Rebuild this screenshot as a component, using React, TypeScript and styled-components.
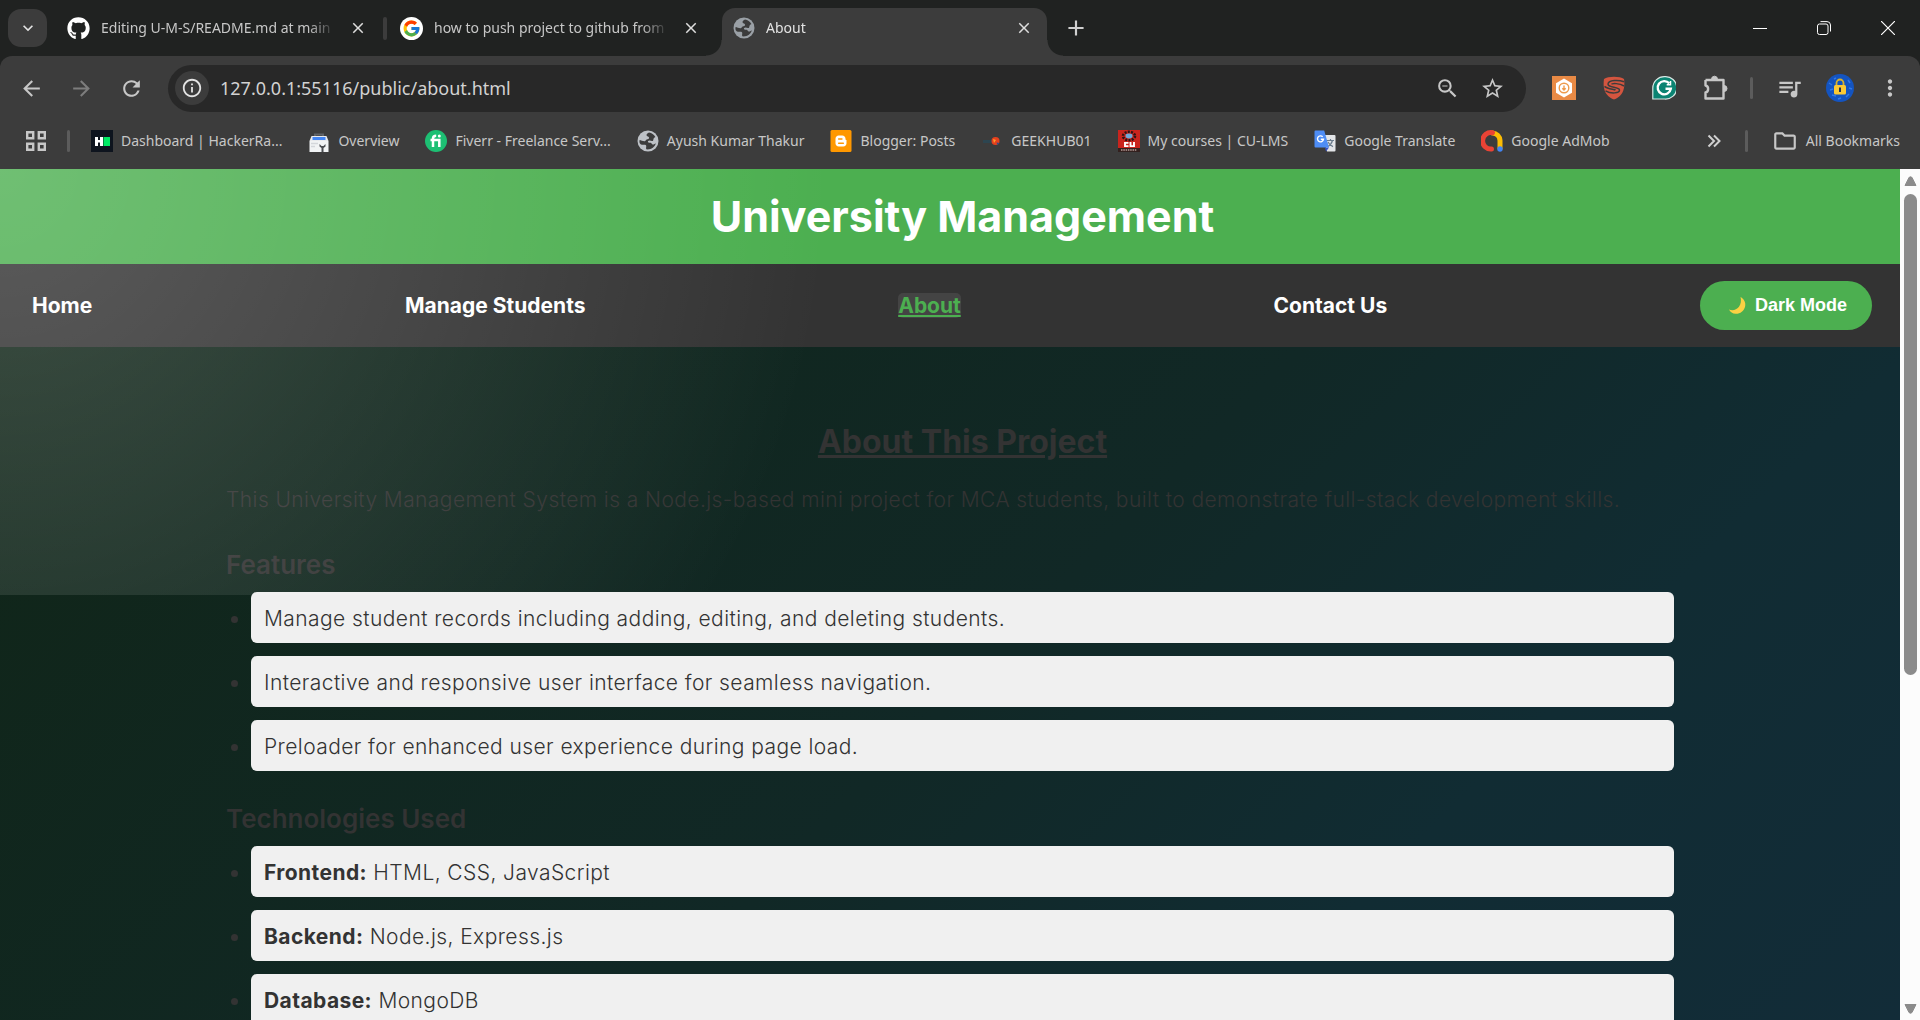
import React from "react";
import styled, { createGlobalStyle, css } from "styled-components";
import {
  MdArrowBack,
  MdArrowForward,
  MdRefresh,
  MdInfoOutline,
  MdZoomOut,
  MdStarBorder,
  MdQueueMusic,
  MdMoreVert,
  MdClose,
  MdAdd,
  MdExpandMore,
  MdOutlineFolder,
} from "react-icons/md";
import { FaGithub } from "react-icons/fa";
import { FcGoogle } from "react-icons/fc";

const uiFont = `"Segoe UI", "Noto Sans", "Open Sans", sans-serif`;
const pageFont = `Inter, "Liberation Sans", sans-serif`;

const GlobalStyle = createGlobalStyle`
  *, *::before, *::after { box-sizing: border-box; }
  body { margin: 0; background: #202221; }
  button { border: 0; padding: 0; background: none; color: inherit; font: inherit; cursor: pointer; }
  svg { display: block; flex: none; }
`;

const Window = styled.div`
  display: flex;
  flex-direction: column;
  height: 100vh;
  overflow: hidden;
  font-family: ${uiFont};
  color: #c7c7c7;
`;

/* ---------- tab strip ---------- */

const TabStrip = styled.div`
  display: flex;
  align-items: flex-end;
  height: 56px;
  padding-left: 8px;
  background: #202221;
`;

const TabSearch = styled.button`
  display: flex;
  align-items: center;
  justify-content: center;
  width: 39px;
  height: 38px;
  margin: 0 9px 9px 0;
  border-radius: 13px;
  background: #3c3c3c;
  color: #e3e3e3;
`;

const TabItem = styled.div<{ $active?: boolean }>`
  position: relative;
  display: flex;
  align-items: center;
  gap: 11px;
  width: 333px;
  height: 48px;
  padding: 0 22px 8px 11px;
  line-height: 20px;
  ${(p) =>
    p.$active &&
    css`
      width: 325px;
      padding-right: 14px;
      border-radius: 13px 13px 0 0;
      background: #3c3c3c;
      color: #e3e3e3;
      &::before,
      &::after {
        content: "";
        position: absolute;
        bottom: 0;
        width: 16px;
        height: 16px;
      }
      &::before {
        right: 100%;
        background: radial-gradient(circle at 0 0, transparent 15px, #3c3c3c 16px);
      }
      &::after {
        left: 100%;
        background: radial-gradient(circle at 100% 0, transparent 15px, #3c3c3c 16px);
      }
    `}
`;

const TabTitle = styled.span`
  flex: 1;
  overflow: hidden;
  white-space: nowrap;
  font-size: 14px;
  mask-image: linear-gradient(to right, #000 calc(100% - 28px), transparent);
`;

const TabClose = styled.button`
  display: flex;
  margin-left: 2px;
  color: #dedede;
`;

const TabDivider = styled.span`
  width: 4px;
  height: 23px;
  margin-bottom: 16px;
  margin-left: -6px;
  margin-right: 2px;
  border-radius: 2px;
  background: #3c3c3c;
`;

const NewTab = styled.button`
  display: flex;
  margin: 0 auto 15px 16px;
  color: #d0d0d0;
`;

const WindowControls = styled.div`
  display: flex;
  align-items: center;
  height: 56px;
`;

const WindowButton = styled.button`
  display: flex;
  align-items: center;
  justify-content: center;
  width: 64px;
  height: 56px;
  color: #fff;
`;

/* ---------- toolbar ---------- */

const BrowserBars = styled.div`
  background: linear-gradient(#202221 10px, #3c3c3c 10px);
`;

const Toolbar = styled.div`
  display: flex;
  align-items: center;
  height: 64px;
  padding: 0 17px 0 19px;
  border-radius: 12px 12px 0 0;
  background: #3c3c3c;
`;

const NavButtons = styled.div`
  display: flex;
  gap: 25px;
  margin-right: 24px;
`;

const IconButton = styled.button<{ $dim?: boolean }>`
  display: flex;
  align-items: center;
  justify-content: center;
  min-width: 24px;
  height: 32px;
  color: ${(p) => (p.$dim ? "#7d7d7d" : "#c7c7c7")};
`;

const AddressBar = styled.div`
  display: flex;
  flex: 1;
  align-items: center;
  gap: 20px;
  height: 47px;
  padding: 0 21px 0 7px;
  border-radius: 24px;
  background: #282828;
`;

const SiteInfo = styled.button`
  display: flex;
  align-items: center;
  justify-content: center;
  width: 34px;
  height: 34px;
  margin-right: -9px;
  border-radius: 50%;
  background: #3c3c3c;
  color: #e3e3e3;
`;

const AddressInput = styled.input`
  flex: 1;
  min-width: 0;
  height: 40px;
  padding: 0;
  border: 0;
  outline: 0;
  background: transparent;
  color: #d2d2d2;
  font-family: ${uiFont};
  font-size: 18px;
`;

const Extensions = styled.div`
  display: flex;
  align-items: center;
  gap: 26px;
  margin-left: 26px;
`;

const ProfileTools = styled.div`
  display: flex;
  align-items: center;
  gap: 23px;
  margin-left: 22px;
`;

const Divider = styled.span`
  width: 3px;
  height: 22px;
  border-radius: 2px;
  background: #5c5c5c;
`;

/* ---------- bookmarks ---------- */

const BookmarkBar = styled.nav`
  display: flex;
  align-items: center;
  gap: 21px;
  height: 49px;
  padding: 0 20px 8px 26px;
  color: #c7c7c7;
  font-size: 14px;
  line-height: 20px;
  white-space: nowrap;
`;

const BookmarkList = styled.div`
  display: flex;
  flex: 1;
  gap: 26px;
  min-width: 0;
  overflow: hidden;
`;

const BookmarkOverflow = styled.div`
  display: flex;
  align-items: center;
  gap: 24px;
`;

const Bookmark = styled.a`
  display: flex;
  align-items: center;
  gap: 8px;
  color: inherit;
  text-decoration: none;
`;

/* ---------- web page ---------- */

const Viewport = styled.div`
  display: flex;
  flex: 1;
  min-height: 0;
`;

const Page = styled.div`
  position: relative;
  flex: 1;
  overflow: hidden;
  background: linear-gradient(135deg, #102516 0, #112826 1050px, #112c33 1480px, #122c38 1950px);
  color: #333;
  font-family: ${pageFont};
`;

const Glow = styled.div`
  position: absolute;
  top: 0;
  left: 0;
  width: 50%;
  height: 50%;
  background: radial-gradient(circle at top left, rgba(255, 255, 255, 0.2), transparent 80%);
  pointer-events: none;
`;

const Header = styled.header`
  padding: 20px 0 20px 25px;
  background: #4caf50;
  color: #fff;
  text-align: center;
`;

const SiteTitle = styled.h1`
  margin: 0;
  font-size: 43px;
  line-height: 55px;
  font-weight: 700;
`;

const SiteNav = styled.nav`
  display: flex;
  align-items: center;
  justify-content: space-between;
  height: 83px;
  padding: 0 28px 0 32px;
  background: #333;
`;

const NavLink = styled.a<{ $active?: boolean }>`
  border-radius: 5px;
  background: ${(p) => (p.$active ? "#444" : "transparent")};
  color: ${(p) => (p.$active ? "#4caf50" : "#fff")};
  font-size: 21px;
  line-height: 25px;
  font-weight: 700;
  text-decoration: ${(p) => (p.$active ? "underline" : "none")};
`;

const ThemeToggle = styled.button`
  display: flex;
  align-items: center;
  gap: 8px;
  height: 49px;
  padding: 0 25px 0 28px;
  border-radius: 25px;
  background: #4caf50;
  color: #fff;
  font-family: Arial, "Liberation Sans", sans-serif;
  font-size: 18px;
  font-weight: 700;
`;

const Main = styled.main`
  padding: 76px 0 0 25px;
`;

const Content = styled.div`
  max-width: 1473px;
  margin: 0 auto;
`;

const PageTitle = styled.h2`
  margin: 0 0 22px;
  font-size: 32px;
  line-height: 38px;
  font-weight: 700;
  text-align: center;
  text-decoration: underline;
`;

const Intro = styled.p`
  margin: 0;
  font-size: 21px;
  line-height: 34px;
  font-weight: 300;
  letter-spacing: 0.02em;
`;

const SectionTitle = styled.h3`
  margin: 0;
  padding: 32px 0 11px;
  font-size: 26px;
  line-height: 32px;
  font-weight: 600;
`;

const List = styled.ul`
  display: grid;
  gap: 13px;
  margin: 0;
  padding: 0 25px;
`;

const ListItem = styled.li`
  padding: 11px 13px 8px;
  border-radius: 6px;
  background: #f0f0f0;
  font-size: 21px;
  line-height: 32px;
  font-weight: 300;
  letter-spacing: 0.02em;
`;

const Strong = styled.strong`
  font-weight: 700;
`;

const ScrollTrack = styled.div`
  display: flex;
  flex-direction: column;
  align-items: center;
  gap: 8px;
  width: 20px;
  padding: 7px 0 6px;
  background: #fcfcfc;
`;

const ScrollSpace = styled.div`
  flex: 1;
  width: 13px;
`;

const ScrollThumb = styled.div`
  width: 13px;
  height: 60%;
  border-radius: 7px;
  background: #8b8b8b;
`;

/* ---------- drawings ---------- */

const Globe = ({ color = "#bdc1c6" }: { color?: string }) => (
  <svg width="22" height="22" viewBox="0 0 22 22">
    <circle cx="11" cy="11" r="10.5" fill={color} />
    <path
      d="M12 2.600c-2 .8-2.800 2-2.300 3.200.5 1 2.300.6 2.400 1.900.1 1.400-1.400 1.300-2.500 1.700-1 .4-.8 1.600-2 1.800-1.500.2-3.600-1-5-1.200-.7 3 .5 4.400 2.200 4.700 1.900.3 3.600-.3 4.300.9.5 1-.3 1.800.1 3.700 4.500.7 8.600-2 9.700-6.100-1.200.5-1.900 1.500-3.100 1.300-1.200-.2-1-1.600-2.200-1.800-1-.2-1.900.3-2.500-.4-.6-.9.3-1.700 1.400-1.700 1.300 0 2.200.9 3.300.3.9-.5.3-1.700 1-2.600.5-.7 1.200-.6 1.600-1.200-1.500-2.400-3.600-4-6.400-4.500z"
      fill="#3c3c3c"
    />
  </svg>
);

const AppsIcon = () => (
  <svg width="20" height="20" viewBox="0 0 20 20" fill="none" stroke="#c7c7c7" strokeWidth="2.4">
    <path d="M1.200 1.200h6v6h-6zM12.800 1.200h6v6h-6zM1.200 12.800h6v6h-6zM12.800 12.800h6v6h-6z" />
  </svg>
);

const HackerRank = () => (
  <svg width="22" height="22" viewBox="0 0 22 22">
    <rect width="22" height="22" fill="#0e141e" />
    <path d="M4 7h3v3h2V7h3v9H9v-3.500H7V16H4z" fill="#fff" />
    <rect x="12.5" y="7" width="6.5" height="9" fill="#00ea64" />
  </svg>
);

const Toolbox = () => (
  <svg width="22" height="22" viewBox="0 0 22 22">
    <path d="M7 6V4.500h8V6" fill="none" stroke="#5f6368" strokeWidth="2" />
    <path d="M3.500 6h15l2 5h-19z" fill="#e8eaed" />
    <path d="M4.500 7h13v3h-13z" fill="#4285f4" />
    <path d="M1.500 11h19v11h-19z" fill="#f1f3f4" />
    <path d="M3 13.500h7M3 16.500h4" stroke="#d3d6da" strokeWidth="1.400" />
    <path d="M11.500 14v2.500l2 1.500v4h2v-4l2-1.500V14l-2 2h-2z" fill="#4a4d51" />
  </svg>
);

const Fiverr = () => (
  <svg width="22" height="22" viewBox="0 0 22 22">
    <circle cx="11" cy="11" r="11" fill="#1dbf73" />
    <path
      d="M8 17V8.500c0-2 1-2.800 3.200-2.800M5.500 10h8.800V17"
      fill="none"
      stroke="#fff"
      strokeWidth="2.500"
    />
    <circle cx="14.300" cy="6" r="1.500" fill="#fff" />
  </svg>
);

const Blogger = () => (
  <svg width="22" height="22" viewBox="0 0 22 22">
    <rect x=".5" width="21" height="22" rx="1.5" fill="#ff9800" />
    <path
      d="M8.800 5.500h3.400c2 0 3.300 1.300 3.300 3.200 0 1 .3 1.300 1 1.300v3.300c0 1.900-1.300 3.200-3.200 3.200H8.800c-2 0-3.300-1.300-3.300-3.200V8.700c0-1.900 1.300-3.200 3.300-3.200z"
      fill="#fff"
    />
    <path d="M8.700 9h3.200M8.700 13.200h4.600" stroke="#ff9800" strokeWidth="1.600" strokeLinecap="round" />
  </svg>
);

const GeekHub = () => (
  <svg width="22" height="22" viewBox="0 0 22 22">
    <path d="M2 10h9v3H2z" fill="#2d4550" />
    <circle cx="14.500" cy="11" r="4" fill="#e5401e" />
    <path d="M12 9l3 1-2 3z" fill="#ff9d2e" />
    <path d="M15.500 12.500l3 .5-2 2z" fill="#2a4d8f" />
  </svg>
);

const CuLms = () => (
  <svg width="22" height="22" viewBox="0 0 22 22">
    <rect width="22" height="22" fill="#c9241d" />
    <ellipse cx="11" cy="6" rx="6" ry="4.200" fill="none" stroke="#2a1414" strokeWidth="2.600" strokeDasharray="2 1.200" />
    <ellipse cx="11" cy="6" rx="3.500" ry="2.400" fill="#6ea9d8" />
    <path d="M10.500 12.900H7v3.200h3.500M12.500 12v4.100H16V12" fill="none" stroke="#fff" strokeWidth="1.900" />
    <rect y="18" width="22" height="4" fill="#33201e" />
    <path d="M3 20h16" stroke="#b79b96" strokeWidth="1.400" strokeDasharray="1.500 .8" />
  </svg>
);

const Translate = () => (
  <svg width="22" height="22" viewBox="0 0 22 22">
    <path d="M9 5h11.500a1 1 0 0 1 1 1v14.500a1 1 0 0 1-1 1H13z" fill="#e3e5e8" />
    <path
      d="M12.500 10.500h7.500M16.500 9v1.500M18.500 10.500c-.8 3-2.500 4.800-5 6.200M14 12c1 2 2.800 3.700 5 4.600"
      fill="none"
      stroke="#6b7c8c"
      strokeWidth="1.200"
    />
    <path d="M11 17.500h4l-3 4z" fill="#3751c6" />
    <path d="M1.500.5h8.700L15 17.500H1.500a1 1 0 0 1-1-1v-15a1 1 0 0 1 1-1z" fill="#4e8df6" />
    <path d="M8.700 6.800A3 3 0 1 0 9.500 9.200H6.800" fill="none" stroke="#fff" strokeWidth="1.400" />
  </svg>
);

const AdMob = () => (
  <svg width="22" height="22" viewBox="0 0 22 22" fill="none" strokeWidth="5" strokeLinecap="round">
    <path d="M11.500 3A8 8 0 0 1 19 10.500V18" stroke="#fbbc04" />
    <path d="M11.500 2.800a8.200 8.200 0 1 0-1 16.200" stroke="#ea4335" />
    <circle cx="19" cy="19" r="2.700" fill="#4285f4" />
  </svg>
);

const OrangeExt = () => (
  <svg width="24" height="24" viewBox="0 0 24 24">
    <rect width="24" height="24" fill="#e98a45" />
    <path d="M12 2.500l8 4.700v9.600l-8 4.700-8-4.700V7.200z" fill="#fff" />
    <circle cx="12" cy="12" r="4.800" fill="none" stroke="#ee9a4c" strokeWidth="1.400" />
    <path d="M12 9.500v4M10.300 12.200l1.700 1.800 1.700-1.800" fill="none" stroke="#ee9a4c" strokeWidth="1.400" />
  </svg>
);

const SwaggerShield = () => (
  <svg width="24" height="24" viewBox="0 0 24 24">
    <path
      d="M12 .8C8 .8 4 1.500 2 3c-.8 5-.5 11 2.500 15 2 2.800 5 4.700 7.500 5.500 2.500-.8 5.500-2.700 7.500-5.500 3-4 3.300-10 2.500-15-2-1.500-6-2.200-10-2.200z"
      fill="#d4553f"
    />
    <path
      d="M22 5.800C17 3.700 6.500 3.600 6 8c-.4 4 11.200 2.600 11.500 6 .2 3.400-8.500 4-14 .8M22 10C17.500 7.200 10 7 9.800 8.400M2.500 10.300c3.500 2.800 10 2.800 11 3.800"
      fill="none"
      stroke="#3c3c3c"
      strokeWidth="1.500"
    />
  </svg>
);

const Grammarly = () => (
  <svg width="24" height="24" viewBox="0 0 24 24">
    <path
      d="M12.500.7A11.200 11.200 0 1 1 12.500 23H.8V12A11.500 11.500 0 0 1 12.500.7z"
      fill="#0b8372"
      stroke="#d8e8e5"
      strokeWidth="1.200"
    />
    <path d="M17.300 7.400A6.600 6.600 0 1 0 18.800 12.800H13.500" fill="none" stroke="#fff" strokeWidth="2.400" />
    <path d="M18.500 5v3.800h-3.800" fill="none" stroke="#fff" strokeWidth="1.500" />
  </svg>
);

const Puzzle = () => (
  <svg width="26" height="26" viewBox="0 0 26 26">
    <path
      d="M3.500 5h18v4.500M21.500 17v6.500h-18V17.500c3.500-.5 3.500-6.500 0-7V5M21.500 9.500V17"
      fill="none"
      stroke="#c7c7c7"
      strokeWidth="2.400"
      strokeLinejoin="round"
    />
    <path d="M9.500 4.500a3 3.300 0 0 1 6 0zM22 10.500a3 3 0 0 1 0 6z" fill="#c7c7c7" stroke="#c7c7c7" />
  </svg>
);

const Avatar = () => (
  <svg width="28" height="28" viewBox="0 0 28 28">
    <circle cx="14" cy="14" r="14" fill="#1454c0" />
    <path
      d="M3 9l3 2M4 16l3-1M6 21l4 1M20 23l3-3M22 6l2 3M12 25l3-1M23 14l3 1M8 5l2-1"
      stroke="#2f78e8"
      strokeWidth="1.500"
    />
    <path d="M10.500 12V9a3.500 3.500 0 0 1 7 0v3" fill="none" stroke="#d8b22c" strokeWidth="1.800" />
    <rect x="8" y="11" width="12" height="9.500" rx="1.5" fill="#fcc934" />
    <path d="M14 13.500v4.500" stroke="#26324f" strokeWidth="2" />
  </svg>
);

const Chevrons = () => (
  <svg width="14" height="14" viewBox="0 0 14 14" fill="none" stroke="#d0d0d0" strokeWidth="2">
    <path d="M1.500 1.500L7 7l-5.500 5.500M7 1.500L12.500 7 7 12.500" />
  </svg>
);

const Moon = () => (
  <svg width="19" height="19" viewBox="0 0 19 19">
    <path
      d="M12.500 1c3.500 2 5.500 5.500 4.600 9.500-1 4.500-5 7.500-9.500 7.300-3-.1-5.300-1.700-6.600-4.300 3.500 1.500 7.500.5 9.800-2.500 2.200-3 2.600-6.500 1.700-10z"
      fill="#fbd143"
    />
  </svg>
);

const Minimize = () => (
  <svg width="14" height="14" viewBox="0 0 14 14" stroke="#fff">
    <path d="M0 7.500h14" />
  </svg>
);

const Restore = () => (
  <svg width="14" height="14" viewBox="0 0 14 14" fill="none" stroke="#fff">
    <rect x=".5" y="3" width="10.500" height="10.500" rx="2" />
    <path d="M3.500.6H10A3.500 3.500 0 0 1 13.500 4v6.500" />
  </svg>
);

const CloseWindow = () => (
  <svg width="14" height="14" viewBox="0 0 14 14" stroke="#fff" strokeWidth="1.200">
    <path d="M0 0l14 14M14 0L0 14" />
  </svg>
);

const Arrow = ({ down }: { down?: boolean }) => (
  <svg width="13" height="10" viewBox="0 0 13 10">
    <path
      d={down ? "M1 .5h11L8 8.500q-1.500 1.500-3 0z" : "M5 1.500q1.500-1.500 3 0L12 9.500H1z"}
      fill="#8b8b8b"
      stroke="#8b8b8b"
      strokeLinejoin="round"
    />
  </svg>
);

/* ---------- data ---------- */

const bookmarks = [
  { label: "Dashboard | HackerRa...", icon: <HackerRank /> },
  { label: "Overview", icon: <Toolbox /> },
  { label: "Fiverr - Freelance Serv...", icon: <Fiverr /> },
  { label: "Ayush Kumar Thakur", icon: <Globe /> },
  { label: "Blogger: Posts", icon: <Blogger /> },
  { label: "GEEKHUB01", icon: <GeekHub /> },
  { label: "My courses | CU-LMS", icon: <CuLms /> },
  { label: "Google Translate", icon: <Translate /> },
  { label: "Google AdMob", icon: <AdMob /> },
];

const links = ["Home", "Manage Students", "About", "Contact Us"];

const features = [
  "Manage student records including adding, editing, and deleting students.",
  "Interactive and responsive user interface for seamless navigation.",
  "Preloader for enhanced user experience during page load.",
];

const technologies = [
  ["Frontend:", "HTML, CSS, JavaScript"],
  ["Backend:", "Node.js, Express.js"],
  ["Database:", "MongoDB"],
];

const GoogleBadge = styled.span`
  display: flex;
  padding: 2px;
  border-radius: 50%;
  background: #fff;
`;

export default function App() {
  return (
    <Window>
      <GlobalStyle />
      <TabStrip>
        <TabSearch aria-label="Search tabs">
          <MdExpandMore size={20} />
        </TabSearch>
        <TabItem>
          <FaGithub size={23} color="#fff" />
          <TabTitle>Editing U-M-S/README.md at main</TabTitle>
          <TabClose aria-label="Close tab">
            <MdClose size={18} />
          </TabClose>
        </TabItem>
        <TabDivider />
        <TabItem>
          <GoogleBadge>
            <FcGoogle size={19} />
          </GoogleBadge>
          <TabTitle>how to push project to github from</TabTitle>
          <TabClose aria-label="Close tab">
            <MdClose size={18} />
          </TabClose>
        </TabItem>
        <TabItem $active>
          <Globe color="#9aa0a6" />
          <TabTitle>About</TabTitle>
          <TabClose aria-label="Close tab">
            <MdClose size={18} />
          </TabClose>
        </TabItem>
        <NewTab aria-label="New tab">
          <MdAdd size={26} />
        </NewTab>
        <WindowControls>
          <WindowButton aria-label="Minimize">
            <Minimize />
          </WindowButton>
          <WindowButton aria-label="Restore">
            <Restore />
          </WindowButton>
          <WindowButton aria-label="Close">
            <CloseWindow />
          </WindowButton>
        </WindowControls>
      </TabStrip>

      <BrowserBars>
        <Toolbar>
          <NavButtons>
            <IconButton aria-label="Back">
              <MdArrowBack size={25} />
            </IconButton>
            <IconButton $dim aria-label="Forward">
              <MdArrowForward size={25} />
            </IconButton>
            <IconButton aria-label="Reload">
              <MdRefresh size={25} />
            </IconButton>
          </NavButtons>
          <AddressBar>
            <SiteInfo aria-label="Site information">
              <MdInfoOutline size={22} />
            </SiteInfo>
            <AddressInput aria-label="Address" defaultValue="127.0.0.1:55116/public/about.html" />
            <IconButton aria-label="Zoom">
              <MdZoomOut size={25} />
            </IconButton>
            <IconButton aria-label="Bookmark this page">
              <MdStarBorder size={25} />
            </IconButton>
          </AddressBar>
          <Extensions>
            <IconButton aria-label="Extension">
              <OrangeExt />
            </IconButton>
            <IconButton aria-label="Swagger">
              <SwaggerShield />
            </IconButton>
            <IconButton aria-label="Grammarly">
              <Grammarly />
            </IconButton>
            <IconButton aria-label="Extensions">
              <Puzzle />
            </IconButton>
          </Extensions>
          <ProfileTools>
            <Divider />
            <IconButton aria-label="Media controls">
              <MdQueueMusic size={27} />
            </IconButton>
            <IconButton aria-label="Profile">
              <Avatar />
            </IconButton>
            <IconButton aria-label="Menu">
              <MdMoreVert size={26} />
            </IconButton>
          </ProfileTools>
        </Toolbar>
        <BookmarkBar aria-label="Bookmarks">
          <AppsIcon />
          <Divider />
          <BookmarkList>
            {bookmarks.map((b) => (
              <Bookmark href="#" key={b.label}>
                {b.icon}
                {b.label}
              </Bookmark>
            ))}
          </BookmarkList>
          <BookmarkOverflow>
            <Chevrons />
            <Divider />
            <Bookmark href="#">
              <MdOutlineFolder size={26} />
              All Bookmarks
            </Bookmark>
          </BookmarkOverflow>
        </BookmarkBar>
      </BrowserBars>

      <Viewport>
        <Page>
          <Header>
            <SiteTitle>University Management</SiteTitle>
          </Header>
          <SiteNav>
            {links.map((l) => (
              <NavLink href="#" key={l} $active={l === "About"}>
                {l}
              </NavLink>
            ))}
            <ThemeToggle>
              <Moon />
              Dark Mode
            </ThemeToggle>
          </SiteNav>
          <Main>
            <Content>
              <PageTitle>About This Project</PageTitle>
              <Intro>
                This University Management System is a Node.js-based mini project for MCA students,
                built to demonstrate full-stack development skills.
              </Intro>
              <SectionTitle>Features</SectionTitle>
              <List>
                {features.map((f) => (
                  <ListItem key={f}>{f}</ListItem>
                ))}
              </List>
              <SectionTitle>Technologies Used</SectionTitle>
              <List>
                {technologies.map(([name, value]) => (
                  <ListItem key={name}>
                    <Strong>{name}</Strong> {value}
                  </ListItem>
                ))}
              </List>
            </Content>
          </Main>
          <Glow />
        </Page>
        <ScrollTrack>
          <Arrow />
          <ScrollSpace>
            <ScrollThumb />
          </ScrollSpace>
          <Arrow down />
        </ScrollTrack>
      </Viewport>
    </Window>
  );
}
